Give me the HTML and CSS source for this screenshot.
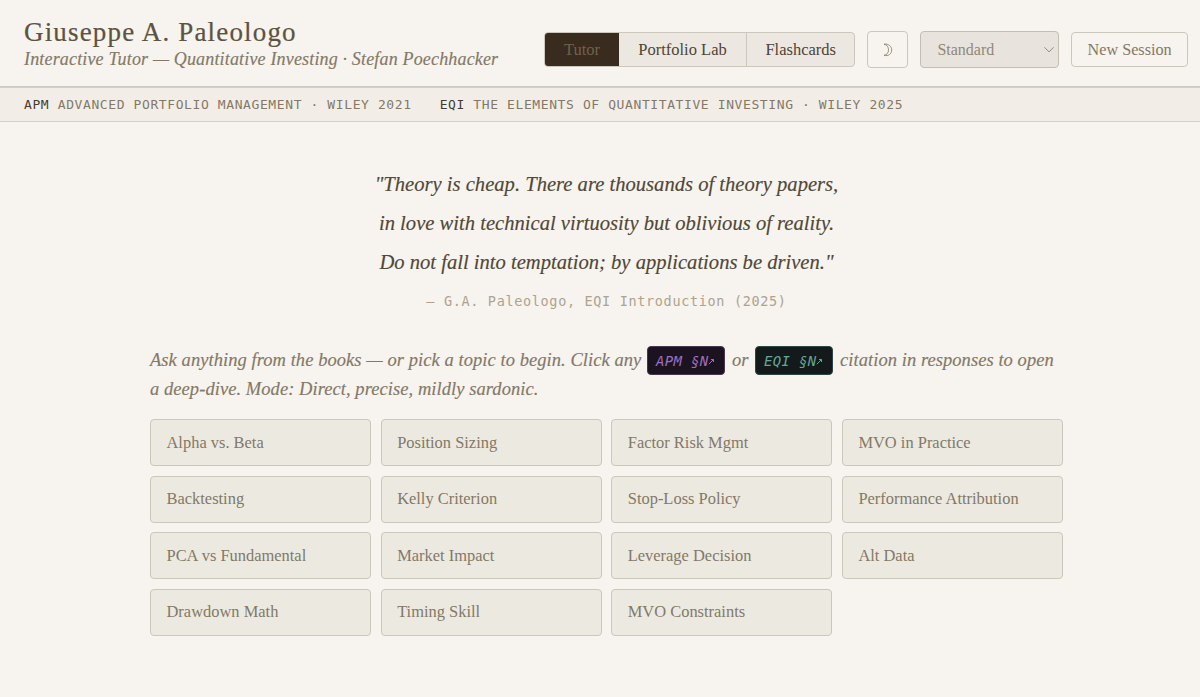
FILE: index.html
```
<!DOCTYPE html>
<html lang="en">
<head>
<meta charset="utf-8">
<title>Giuseppe A. Paleologo</title>
<link rel="stylesheet" href="styles.css">
</head>
<body>
<header class="header">
  <div class="brand">
    <h1 class="name"><span>Giuseppe A. Paleologo</span></h1>
    <p class="subtitle"><span>Interactive Tutor — Quantitative Investing · Stefan Poechhacker</span></p>
  </div>
  <nav class="tabs">
    <button class="tab active">Tutor</button>
    <button class="tab lab">Portfolio Lab</button>
    <button class="tab cards">Flashcards</button>
  </nav>
  <button class="theme" aria-label="Theme"><svg width="12" height="14" viewBox="0 0 12 14"><path d="M2 1.200C6.500 .4 9.700 3.300 9.700 7S6.500 13.600 2 12.300C5 11.800 6.500 9.800 6.500 6.800S5 1.900 2 1.200Z"/></svg></button>
  <button class="select"><span>Standard</span><svg width="12" height="8" viewBox="0 0 12 8"><path d="M1.500 1.300L6 5.900L10.500 1.300"/></svg></button>
  <button class="session">New Session</button>
</header>
<div class="books">
  <span class="book"><b>APM</b> ADVANCED PORTFOLIO MANAGEMENT · WILEY 2021</span>
  <span class="book"><b>EQI</b> THE ELEMENTS OF QUANTITATIVE INVESTING · WILEY 2025</span>
</div>
<main class="main">
  <blockquote class="quote">
    <div>"Theory is cheap. There are thousands of theory papers,</div>
    <div>in love with technical virtuosity but oblivious of reality.</div>
    <div>Do not fall into temptation; by applications be driven."</div>
  </blockquote>
  <p class="source">— G.A. Paleologo, EQI Introduction (2025)</p>
  <div class="intro">
    <div class="row"><span class="lead">Ask anything from the books — or pick a topic to begin. Click any</span><span class="cite apm">APM §N<svg width="7" height="7" viewBox="0 0 7 7"><path d="M.8 6.200L5.500 1.500M3 1.500H5.500V4"/></svg></span><span class="or">or</span><span class="cite eqi">EQI §N<svg width="7" height="7" viewBox="0 0 7 7"><path d="M.8 6.200L5.500 1.500M3 1.500H5.500V4"/></svg></span><span class="tail">citation in responses to open</span></div>
    <div class="row"><span>a deep-dive. Mode: Direct, precise, mildly sardonic.</span></div>
  </div>
  <div class="topics">
    <button class="topic">Alpha vs. Beta</button>
    <button class="topic">Position Sizing</button>
    <button class="topic">Factor Risk Mgmt</button>
    <button class="topic">MVO in Practice</button>
    <button class="topic">Backtesting</button>
    <button class="topic">Kelly Criterion</button>
    <button class="topic">Stop-Loss Policy</button>
    <button class="topic">Performance Attribution</button>
    <button class="topic">PCA vs Fundamental</button>
    <button class="topic">Market Impact</button>
    <button class="topic">Leverage Decision</button>
    <button class="topic">Alt Data</button>
    <button class="topic">Drawdown Math</button>
    <button class="topic">Timing Skill</button>
    <button class="topic">MVO Constraints</button>
  </div>
</main>
</body>
</html>
```
FILE: styles.css
```
* { box-sizing: border-box; }
body { margin: 0; min-height: 697px; background: #f7f3ee; color: #837967; font-family: "Liberation Serif", serif; }
h1, p, blockquote { margin: 0; font-weight: 400; }
button { font: inherit; color: inherit; margin: 0; padding: 1px 0 0; background: none; border: 1px solid #cbc7bd; border-radius: 4px; white-space: nowrap; }
svg { fill: none; stroke: currentColor; display: block; flex: none; }
.header { height: 88px; display: flex; align-items: center; padding: 0 12px 0 24px; border-bottom: 1px solid #d2cec7; box-shadow: inset 0 -1px #cfcbc4; }
.brand { width: 520px; flex: none; height: 56px; white-space: nowrap; }
.name { font-size: 27px; line-height: 32px; letter-spacing: 1.170px; color: #5e5240; -webkit-text-stroke: .2px; }
.subtitle { font-size: 18px; line-height: 22px; font-style: italic; color: #837967; letter-spacing: .165px; -webkit-text-stroke: .15px; }
.tabs { display: flex; width: 312px; height: 35px; margin: 12px 0 0; background: #ece8e1; border: 1px solid #cbc7bd; border-radius: 4px; overflow: hidden; font-size: 16.500px; color: #4d4434; }
.tab { border: 0; border-radius: 0; }
.tab.active { width: 74px; background: #392c1e; color: #6f614c; }
.tab.lab { width: 128px; border-right: 1px solid #cbc7bd; }
.cards { flex: 1; }
.theme, .select, .session { margin-top: 11px; }
.theme { margin-left: 12px; width: 41px; height: 37px; display: flex; align-items: center; justify-content: center; }
.theme svg { stroke-width: .8; }
.select { margin-left: 12px; width: 139px; height: 37px; background: #e8e4dd; border-color: #c2beb4; display: flex; align-items: center; justify-content: space-between; padding: 1px 3px 0 16px; font-size: 16px; color: #918878; }
.session { margin-left: 12px; width: 117px; height: 35px; padding-top: 2px; font-size: 16.200px; }
.books { height: 34px; display: flex; align-items: center; gap: 28px; padding: 0 24px; background: #f2eee7; border-bottom: 1px solid #d2cfc8; font: 13px "DejaVu Sans Mono", monospace; letter-spacing: .6px; white-space: nowrap; }
.books b { font-weight: 400; color: #443b2d; }
.main { width: 913px; margin: 0 0 0 150px; padding-top: 43px; }
.quote { font-size: 20.600px; line-height: 39px; font-style: italic; text-align: center; color: #504736; white-space: nowrap; -webkit-text-stroke: .15px; }
.source { margin-top: 10px; text-align: center; font: 13.500px/18px "DejaVu Sans Mono", monospace; letter-spacing: .66px; color: #ada38e; }
.intro { margin-top: 36px; height: 73px; font-size: 18.500px; letter-spacing: .06px; font-style: italic; white-space: nowrap; -webkit-text-stroke: .15px; }
.row { height: 29px; display: flex; align-items: center; }
.lead { width: 497px; }
.or { width: 30px; padding-left: 7px; }
.tail { padding-left: 7px; }
.cite { width: 78px; height: 29px; border: 1px solid #463650; border-radius: 4px; display: flex; align-items: center; padding: 0 0 0 8px; font: italic 14px "DejaVu Sans Mono", monospace; letter-spacing: .3px; -webkit-text-stroke: 0; }
.cite svg { margin-top: 2px; }
.apm { background: #1c1320; color: #9c6fc0; }
.eqi { background: #141a1a; color: #63a69c; border-color: #2d4644; }
.topics { display: grid; grid-template-columns: repeat(4, 1fr); gap: 9.500px; }
.topic { height: 47px; background: #ece9e1; text-align: left; padding: 0 0 0 15.500px; font-size: 16.450px; }
```
